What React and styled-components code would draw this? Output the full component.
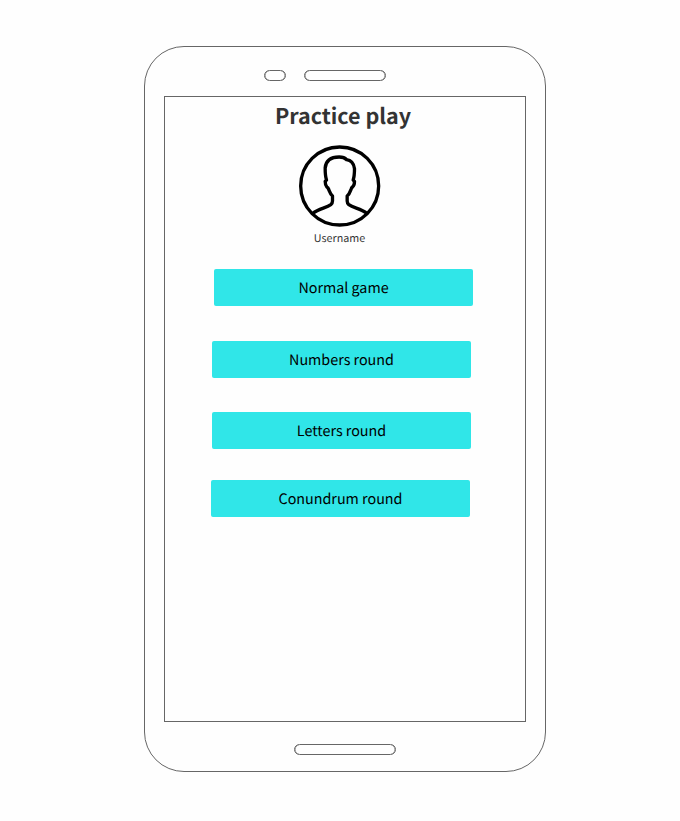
import React from 'react';
import styled, { createGlobalStyle } from 'styled-components';

const GlobalStyle = createGlobalStyle`
  * { box-sizing: border-box; }
  body {
    margin: 0;
    background: #fefefe;
    font-family: "Noto Sans CJK SC", "Noto Sans", sans-serif;
    font-variant-ligatures: none;
    text-rendering: geometricPrecision;
  }
`;

const Page = styled.div`
  height: 821px;
  padding: 46px 0 0 144px;
`;

const Phone = styled.main`
  display: flex;
  flex-direction: column;
  width: 402px;
  height: 726px;
  padding: 0 19px;
  border: 1px solid #666;
  border-radius: 40px;
`;

const TopBezel = styled.div`
  display: flex;
  gap: 18px;
  height: 49px;
  padding: 23px 0 0 100px;
`;

const BottomBezel = styled.div`
  display: flex;
  justify-content: center;
  padding-top: 22px;
`;

const Slot = styled.div`
  width: ${({ $width }) => $width}px;
  height: 11px;
  border: 1px solid #666;
  border-radius: 5.5px;
  box-shadow: inset 0.5px 0 #777, inset -0.5px 0 #777;
`;

const Screen = styled.section`
  display: flex;
  flex-direction: column;
  width: 362px;
  height: 626px;
  border: 1px solid #666;
`;

const Title = styled.h1`
  margin: 4px 0 0;
  padding-right: 4px;
  color: #333;
  font-size: 21.5px;
  font-weight: 700;
  line-height: 29px;
  text-align: center;
`;

const Profile = styled.div`
  display: flex;
  flex-direction: column;
  align-items: center;
  height: 103px;
  margin: 15px 11px 21px 0;
`;

const Avatar = styled.svg`
  display: block;
  flex: none;
  width: 82px;
  height: 82px;
`;

const Username = styled.span`
  color: #333;
  font-size: 10.74px;
  line-height: 18px;
  margin-top: 3px;
`;

const Menu = styled.nav`
  display: flex;
  flex-direction: column;
  align-items: flex-start;
`;

const GameButton = styled.button`
  width: 259px;
  height: 37px;
  margin: ${({ $gap = 0 }) => $gap}px 0 0 ${({ $indent }) => $indent}px;
  padding: 0 0 1px;
  border: 0;
  border-radius: 2px;
  background: #30e6e8;
  color: #000;
  font: 400 14.32px/35px "Noto Sans CJK SC", "Noto Sans", sans-serif;
  font-variant-ligatures: none;
  text-rendering: geometricPrecision;
  text-align: center;
`;

export default function App() {
  return (
    <>
      <GlobalStyle />
      <Page>
        <Phone>
          <TopBezel>
            <Slot $width={22} />
            <Slot $width={82} />
          </TopBezel>
          <Screen>
            <Title>Practice play</Title>
            <Profile>
              <Avatar viewBox="26.5 15 246 246" fill="none" stroke="#000" strokeWidth="10" aria-label="User avatar">
                <circle cx="148.5" cy="138" r="117" />
                <path
                  strokeLinejoin="round"
                  d="M68 220 C86 206 108 204 122 194 Q127 190 127 183 V168 C120 162 118 154 115 147 Q114 143 110 141 C106 136 105 131 105 124 L109 120 C105 108 105 96 105 84 C107 61 124 51 147 51 C158 51 164 53 169 59 C184 61 191 71 193 86 C193 98 193 108 189 120 L193 124 C193 132 192 137 187 141 Q184 143 183 147 C180 155 178 162 171 168 V183 Q171 190 176 194 C190 204 212 206 230 220"
                />
              </Avatar>
              <Username>Username</Username>
            </Profile>
            <Menu>
              <GameButton $indent={49}>Normal game</GameButton>
              <GameButton $indent={47} $gap={35}>Numbers round</GameButton>
              <GameButton $indent={47} $gap={34}>Letters round</GameButton>
              <GameButton $indent={46} $gap={31}>Conundrum round</GameButton>
            </Menu>
          </Screen>
          <BottomBezel>
            <Slot $width={102} />
          </BottomBezel>
        </Phone>
      </Page>
    </>
  );
}
